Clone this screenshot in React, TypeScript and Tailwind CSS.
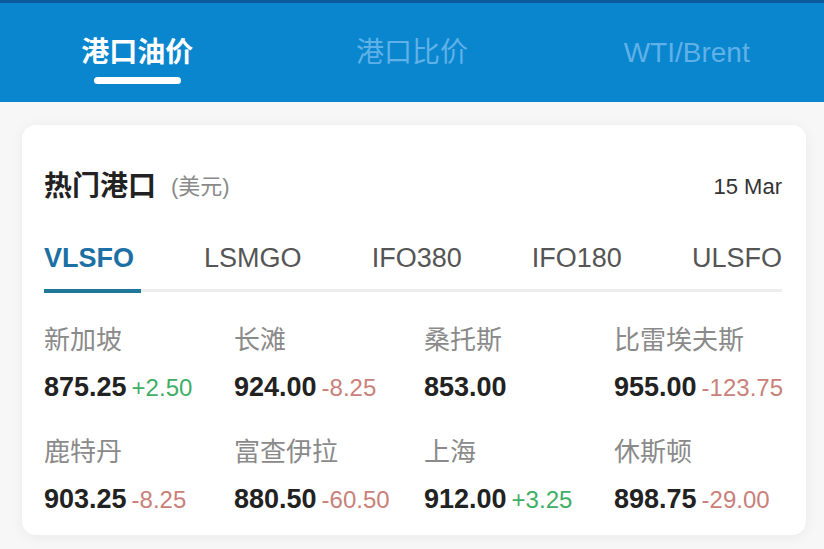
const font = { fontFamily: '"Liberation Sans", "Noto Sans CJK SC", sans-serif' };

const headerTabs = ['港口油价', '港口比价', 'WTI/Brent'];
const fuelTabs = ['VLSFO', 'LSMGO', 'IFO380', 'IFO180', 'ULSFO'];

interface Port {
  name: string;
  price: string;
  change?: string;
}

const ports: Port[] = [
  { name: '新加坡', price: '875.25', change: '+2.50' },
  { name: '长滩', price: '924.00', change: '-8.25' },
  { name: '桑托斯', price: '853.00' },
  { name: '比雷埃夫斯', price: '955.00', change: '-123.75' },
  { name: '鹿特丹', price: '903.25', change: '-8.25' },
  { name: '富查伊拉', price: '880.50', change: '-60.50' },
  { name: '上海', price: '912.00', change: '+3.25' },
  { name: '休斯顿', price: '898.75', change: '-29.00' },
];

export default function App() {
  return (
    <div className="w-[824px] h-[549px] overflow-hidden bg-[#f7f7f7]" style={font}>
      <div className="h-[102px] bg-[#0a86cf] border-t-[3px] border-[#0b5b9c] flex">
        {headerTabs.map((t, i) => (
          <div key={t} className="flex-1 flex flex-col items-center pt-[32px]">
            <span
              className={`text-[28px] leading-[36px] ${
                i === 0 ? 'font-bold text-white' : 'text-[#5fb1e7]'
              }`}
            >
              {t}
            </span>
            {i === 0 && <div className="mt-[6px] h-[7px] w-[87px] rounded-full bg-white" />}
          </div>
        ))}
      </div>

      <div className="ml-[22px] mr-[18px] mt-[23px] bg-white rounded-[14px] shadow-[0_2px_14px_rgba(0,0,0,0.06)] pl-[22px] pr-[24px] pt-[44px] pb-[17px]">
        <div className="flex items-center justify-between leading-[36px]">
          <div className="flex items-center">
            <span className="text-[28px] font-bold text-[#222]">热门港口</span>
            <span className="ml-[15px] text-[22px] text-[#8a8a8a]">(美元)</span>
          </div>
          <span className="text-[22px] text-[#333]">15 Mar</span>
        </div>

        <div className="mt-[35px] flex justify-between pb-[14px]">
          {fuelTabs.map((f, i) => (
            <span
              key={f}
              className={`text-[27px] leading-[36px] ${
                i === 0 ? 'font-bold text-[#1c70a3]' : 'text-[#555]'
              }`}
            >
              {f}
            </span>
          ))}
        </div>
        <div className="h-[3px] bg-[#ededed]">
          <div className="-mt-[1px] h-[4px] w-[97px] bg-[#1f7899]" />
        </div>

        <div className="mt-[30px] grid grid-cols-[190px_190px_190px_170px] gap-y-[28px]">
          {ports.map((p) => (
            <div key={p.name} className="flex flex-col">
              <span className="text-[26px] leading-[36px] text-[#8a8a8a]">{p.name}</span>
              <div className="mt-[11px] flex items-baseline leading-[36px] whitespace-nowrap">
                <span className="text-[27px] font-bold text-[#222]">{p.price}</span>
                {p.change && (
                  <span
                    className={`ml-[5px] text-[24px] ${
                      p.change.startsWith('+') ? 'text-[#3fae67]' : 'text-[#c98179]'
                    }`}
                  >
                    {p.change}
                  </span>
                )}
              </div>
            </div>
          ))}
        </div>
      </div>
    </div>
  );
}
